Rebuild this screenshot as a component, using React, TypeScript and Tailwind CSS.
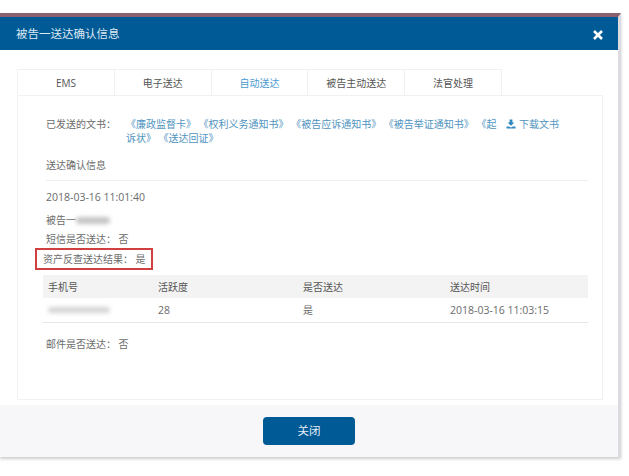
const TABS = ["EMS", "电子送达", "自动送达", "被告主动送达", "法官处理"];

const DOCS = ["《廉政监督卡》", "《权利义务通知书》", "《被告应诉通知书》", "《被告举证通知书》", "《起诉状》", "《送达回证》"];

function Blur({ className }: { className: string }) {
  return <span className={`inline-block rounded-sm blur-[2px] ${className}`} />;
}

export default function App() {
  return (
    <div
      className="h-[476px] w-[629px] overflow-hidden bg-white pt-[13px] text-[10px] leading-[14px] text-[#6b6b6b]"
      style={{ fontFamily: '"Open Sans", "Noto Sans CJK SC", sans-serif' }}
    >
      <div className="flex h-[444px] w-[621px] flex-col border-t-4 border-r-[3px] border-t-[#8a6070] border-r-[#dcdce0] shadow-[0_2px_3px_rgba(0,0,0,0.2)]">
        <header className="flex h-[33px] shrink-0 items-center justify-between bg-[#005a96] pr-[15px] pl-4 text-[11.5px] text-[#dce9f3]">
          <span>被告一送达确认信息</span>
          <svg className="mt-[2px] h-[10px] w-[10px]" viewBox="0 0 10 10" stroke="white" strokeWidth={2.6}>
            <path d="M1 1l8 8M9 1l-8 8" />
          </svg>
        </header>

        <main className="flex min-h-0 flex-1 flex-col bg-white pt-[19px] pr-[15px] pb-[5px] pl-[17px]">
          <div className="flex h-[26px] w-[485px] shrink-0">
            {TABS.map((tab, i) => (
              <div
                key={tab}
                className={`flex flex-1 items-center justify-center border-t border-r border-[#f1f1f4] ${i === 0 ? "border-l" : ""} ${i === 2 ? "text-[#4a9ad0]" : "text-[#555]"}`}
              >
                {tab}
              </div>
            ))}
          </div>

          <div className="flex flex-1 flex-col border border-[#f1f1f4] pr-[14px] pl-[28px]">
            <div className="flex pt-[21px]">
              <span className="w-[80px] shrink-0">已发送的文书：</span>
              <div className="w-[373px] shrink-0 text-[#4f93c0]">{DOCS.join(" ")}</div>
              <div className="ml-[7px] flex h-[14px] shrink-0 items-center gap-[3px] text-[#4f93c0]">
                <svg className="h-[10px] w-[10px]" viewBox="0 0 10 10" fill="#2f88c0">
                  <path d="M3.6 0.5h2.8v3h2L5 6.8 1.6 3.5h2zM0.5 7.6h2.4L5 8.6l2.1-1h2.4v1.9h-9z" />
                </svg>
                下载文书
              </div>
            </div>
            <div className="mt-[13px] border-b border-[#efefef] pb-2">送达确认信息</div>
            <div className="mt-[9px] text-[10.5px]">2018-03-16 11:01:40</div>
            <div className="mt-[9px] flex items-center">
              被告一
              <Blur className="h-[7px] w-[34px] bg-[#c4c4c4]" />
            </div>
            <div className="mt-[5px]">短信是否送达： 否</div>
            <div className="-ml-[11px] mt-[2px] flex h-[22px] w-[118px] shrink-0 items-center border-2 border-[#d04040] pl-[6px]">
              资产反查送达结果： 是
            </div>
            <div className="-ml-[3px] mt-[5px] grid h-[23px] shrink-0 grid-cols-[110px_145px_147px_1fr] items-center bg-[#f3f3f3] px-[5px] text-[#555]">
              <span>手机号</span>
              <span>活跃度</span>
              <span>是否送达</span>
              <span>送达时间</span>
            </div>
            <div className="-ml-[3px] grid h-[25px] shrink-0 grid-cols-[110px_145px_147px_1fr] items-center border-b border-[#e6e6ea] px-[5px]">
              <Blur className="h-[6px] w-[62px] bg-[#d4d4d4]" />
              <span className="text-[10.5px]">28</span>
              <span>是</span>
              <span className="text-[10.5px]">2018-03-16 11:03:15</span>
            </div>
            <div className="mt-[14px]">邮件是否送达： 否</div>
          </div>
        </main>

        <footer className="flex h-[52px] shrink-0 items-center justify-center bg-[#f7f7f9]">
          <button className="h-[28px] w-[92px] rounded-sm bg-[#005a96] text-[11.5px] text-[#e4eef6]">关闭</button>
        </footer>
      </div>
    </div>
  );
}
